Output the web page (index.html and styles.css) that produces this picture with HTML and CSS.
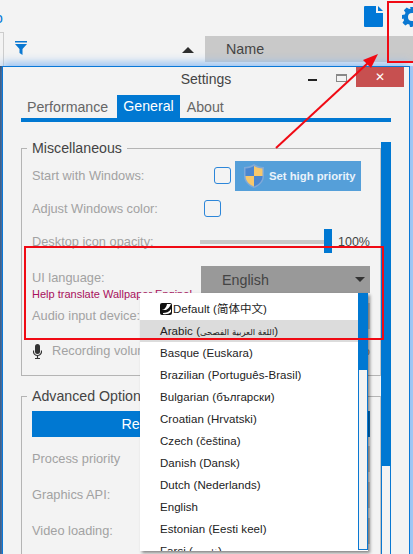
FILE: index.html
```html
<!DOCTYPE html>
<html lang="en">
<head>
<meta charset="utf-8">
<title>Settings</title>
<link rel="stylesheet" href="styles.css">
</head>
<body>
<div class="stage">
  <header class="topbar">
    <span class="stray">o</span>
    <svg class="doc-icon" width="19" height="21" viewBox="0 0 19 21"><path d="M1 0H12V7H19V20a1 1 0 0 1-1 1H1a1 1 0 0 1-1-1V1a1 1 0 0 1 1-1Z"/><path d="M14 0L19 5H14Z"/></svg>
    <svg class="gear-icon" width="20" height="20" viewBox="0 0 20 20"><path fill-rule="evenodd" d="M8 0h4l.6 2.8 1.7.7 2.4-1.6 2.8 2.8-1.6 2.4.7 1.7L20 8v4l-2.9.6-.7 1.7 1.6 2.4-2.8 2.8-2.4-1.6-1.7.7L10.500 20h-2.500l-.6-2.400-1.700-.7-2.400 1.600-2.800-2.800 1.600-2.400-.7-1.700L0 12V8l2.800-.6.7-1.700-1.600-2.400 2.800-2.800 2.400 1.600 1.700-.7ZM10 6a4 4 0 1 0 0 8 4 4 0 0 0 0-8Z"/></svg>
  </header>
  <div class="listhead">
    <svg class="filter-icon" width="12" height="14" viewBox="0 0 12 14"><path d="M0 0H12V1.500H0ZM0 3H12L7.500 8V14L4.500 12V8Z"/></svg>
    <span class="sort-arrow"></span>
    <div class="name-cell"><span>Name</span><i class="name-caret"></i></div>
  </div>
  <div class="lower">
    <section class="window">
      <div class="titlebar">
        <span class="title">Settings</span>
        <span class="win-min"></span>
        <span class="win-max"></span>
        <span class="win-close">✕</span>
      </div>
      <nav class="tabs">
        <span class="tab">Performance</span>
        <span class="tab tab-active">General</span>
        <span class="tab">About</span>
      </nav>
      <div class="content">
        <div class="groups">
          <fieldset class="group group-misc">
            <legend>Miscellaneous</legend>
            <div class="row row-start">
              <span class="label label-start">Start with Windows:</span>
              <span class="check"></span>
              <span class="priority-btn">
                <svg width="20" height="24" viewBox="0 0 20 24"><path d="M10 0C13 2 16 3 20 3V12C20 18 15 22 10 24C5 22 0 18 0 12V3C4 3 7 2 10 0Z" fill="#7fa9d8"/><path d="M10 2C12.500 3.500 15 4.500 18.500 4.500V12H10Z" fill="#f7c76b"/><path d="M10 2V12H1.500V4.500C5 4.500 7.500 3.500 10 2Z" fill="#4b86cf"/><path d="M1.500 12H10V22.500C6 21 1.500 17.500 1.500 12Z" fill="#f7c76b"/><path d="M10 12H18.500C18.500 17.500 14 21 10 22.500Z" fill="#4b86cf"/></svg>
                Set high priority
              </span>
            </div>
            <div class="row row-adjust">
              <span class="label label-adjust">Adjust Windows color:</span>
              <span class="check"></span>
            </div>
            <div class="row row-opacity">
              <span class="label label-slider">Desktop icon opacity:</span>
              <span class="slider"><i class="slider-thumb"></i></span>
              <span class="value">100%</span>
            </div>
            <div class="lang-block">
              <div class="lang-text">
                <span class="label lang-label">UI language:</span>
                <span class="help-link">Help translate Wallpaper Engine!</span>
              </div>
              <div class="select select-dark"><span>English</span><i class="caret"></i></div>
            </div>
            <div class="row row-audio">
              <span class="label label-wide">Audio input device:</span>
              <div class="select select-light"></div>
            </div>
            <div class="row row-record">
              <svg class="mic-icon" width="9" height="15" viewBox="0 0 9 15"><rect x="2" y="0" width="5" height="10" rx="2.500"/><path d="M0.500 6.500V7.500A4 4 0 0 0 8.500 7.500V6.500M4.500 11.500V14M2 14.500H7" fill="none" stroke="#333" stroke-width="1.200"/></svg>
              <span class="label">Recording volume:</span>
              <span class="value value-end">100%</span>
            </div>
          </fieldset>
          <fieldset class="group group-adv">
            <legend>Advanced Options</legend>
            <div class="reset-btn">Reset saved preferences</div>
            <div class="row row-adv"><span class="label label-wide">Process priority</span><div class="select select-light"></div></div>
            <div class="row row-adv"><span class="label label-wide">Graphics API:</span><div class="select select-light"></div></div>
            <div class="row row-adv"><span class="label label-wide">Video loading:</span><div class="select select-light"></div></div>
          </fieldset>
        </div>
        <div class="scrollbar"><div class="scroll-thumb"></div></div>
      </div>
    </section>
  </div>

  <div class="dropdown">
    <ul class="options">
      <li><svg class="flag-icon" width="12" height="12" viewBox="0 0 12 12"><rect width="12" height="12" rx="2" fill="#111"/><path d="M1 7C3 7 6 6 7 1H11C10 4 8 6 6 7ZM3 10C6 10 9 9 11 6V9C9 11 6 11.500 3 11Z" fill="#fff"/></svg>Default (简体中文)</li>
      <li class="option-hover">Arabic (<span class="arabic">اللغة العربية الفصحى</span>)</li>
      <li>Basque (Euskara)</li>
      <li>Brazilian (Português-Brasil)</li>
      <li>Bulgarian (български)</li>
      <li>Croatian (Hrvatski)</li>
      <li>Czech (čeština)</li>
      <li>Danish (Dansk)</li>
      <li>Dutch (Nederlands)</li>
      <li>English</li>
      <li>Estonian (Eesti keel)</li>
      <li>Farsi (<span class="arabic">فارسی</span>)</li>
    </ul>
    <div class="drop-scroll"><div class="drop-thumb"></div></div>
  </div>

  <div class="mark mark-gear"></div>
  <div class="mark mark-lang"></div>
  <svg class="arrow" width="413" height="554" viewBox="0 0 413 554"><path d="M276 148L369 62" stroke="#f00a14" stroke-width="2" fill="none"/><path d="M378 54L363 60L371 68Z" fill="#f00a14"/></svg>
</div>
</body>
</html>
```
FILE: styles.css
```css
* { box-sizing: border-box; }
html, body { margin: 0; padding: 0; }
body {
  width: 413px;
  height: 554px;
  overflow: hidden;
  background: #f3f3f3;
  font-family: "Liberation Sans", Arial, sans-serif;
  color: #444;
}
.stage {
  position: relative;
  width: 413px;
  height: 554px;
  overflow: hidden;
  display: flex;
  flex-direction: column;
}
.topbar {
  height: 36px;
  flex: none;
  display: flex;
  align-items: flex-start;
  padding-top: 6px;
}
.stray { margin: 4px 0 0 -5px; font-size: 14px; line-height: 16px; color: #0078d7; }
.doc-icon { fill: #0078d7; margin-left: auto; }
.gear-icon { fill: #0a78d2; margin: 1px -9px 0 19px; flex: none; }
.listhead {
  height: 26px;
  flex: none;
  display: flex;
  border-top: 0;
  position: relative;
}
.listhead::before {
  content: "";
  position: absolute;
  left: 0;
  top: -4px;
  width: 3px;
  height: 34px;
  border: solid #ccc;
  border-width: 1px 1px 0 0;
}
.filter-icon { fill: #0a78d2; margin: 5px 0 0 15px; flex: none; }
.sort-arrow {
  width: 0;
  height: 0;
  margin: 11px 0 0 155px;
  border: 6px solid transparent;
  border-top: 0;
  border-bottom: 6px solid #2e2e2e;
  flex: none;
}
.name-cell {
  margin-left: 11px;
  flex: 1;
  background: #c9c9c9;
  padding-left: 21px;
  font-size: 14.3px;
  line-height: 26px;
  color: #444;
  display: flex;
  position: relative;
}
.name-caret {
  margin: 11px -10px 0 auto;
  width: 0;
  height: 0;
  border: 4px solid transparent;
  border-top: 4px solid #444;
  border-bottom: 0;
}
.lower {
  flex: 1;
  min-height: 0;
  margin-top: 4px;
  padding: 0 3px 0 2px;
  background: linear-gradient(to right, #0d2a52 0, #0d2a52 2px, #f3f3f3 2px, #f3f3f3 410px, #a9cdf7 410px);
}
.window {
  height: 500px;
  background: #f3f3f3;
  border: 1px solid #0a78d7;
  border-bottom: 0;
  box-shadow: 0 -3px 9px #8dbcf2;
  padding: 0 18px;
  position: relative;
}
.titlebar {
  height: 28px;
  display: flex;
  margin: 0 -18px;
  position: relative;
}
.title {
  position: absolute;
  left: 0;
  right: 0;
  top: 3px;
  text-align: center;
  font-size: 14px;
  line-height: 18px;
}
.win-min { position: absolute; left: 305px; top: 12px; width: 9px; height: 2px; background: #222; }
.win-max { position: absolute; left: 333px; top: 7px; width: 11px; height: 8px; border: 1px solid #888; border-top-width: 2px; }
.win-close {
  position: absolute;
  left: 353px;
  top: 0;
  width: 48px;
  height: 20px;
  background: #c75050;
  color: #fff;
  font-size: 12px;
  line-height: 20px;
  text-align: center;
}
.tabs {
  height: 27px;
  display: flex;
  border-bottom: 4px solid #0078d2;
  align-items: stretch;
  width: 370px;
}
.tab { padding: 3px 6px 0; font-size: 14.2px; line-height: 18px; color: #666; }
.tab-active { background: #0078d2; color: #fff; padding-top: 2px; margin: 0 1px 0 3px; }
.content { display: flex; margin-top: 18px; }
.groups { width: 360px; flex: none; }
.scrollbar {
  width: 10px;
  flex: none;
  margin-top: 2px;
  height: 412px;
  background: #f3f3f3;
  border: solid #0a78d2;
  border-width: 0 1px;
}
.scroll-thumb { height: 324px; margin: 0 -1px; background: #0078d2; }
.group {
  margin: 0;
  padding: 3px 10px 0;
  border: 1px solid #b4b4b4;
  border-right-color: #c4c4c4;
  min-width: 0;
}
.group-misc { height: 236px; }
.group-adv { margin-top: 12px; padding-top: 7px; height: 260px; }
legend {
  margin-left: -5px;
  padding: 0 5px;
  font-size: 14.2px;
  line-height: 16px;
  color: #444;
}
.row { display: flex; align-items: center; }
.row-start, .row-adjust { height: 33px; }
.row-opacity { height: 34px; }
.label { font-size: 12.8px; line-height: 16px; color: #a2a2a2; flex: none; white-space: nowrap; }
.label-start { width: 182px; }
.label-adjust { width: 172px; }
.label-wide { width: 169px; }
.label-slider { width: 168px; }
.check {
  width: 17px;
  height: 17px;
  flex: none;
  border: 1.500px solid #2c86d9;
  border-radius: 3px;
}
.priority-btn {
  margin-left: 4px;
  width: 126px;
  height: 30px;
  flex: none;
  background: #559fd9;
  display: flex;
  align-items: center;
  gap: 5px;
  padding-left: 9px;
  color: #e9f3fb;
  font-size: 11.3px;
  font-weight: bold;
  white-space: nowrap;
}
.slider {
  width: 128px;
  height: 4px;
  background: #c8c8c8;
  position: relative;
  flex: none;
}
.slider-thumb {
  position: absolute;
  right: -4px;
  top: -11px;
  width: 8px;
  height: 24px;
  background: #0078d2;
}
.value { margin-left: auto; font-size: 12.5px; color: #444; }
.value-end { color: #777; }
.lang-block { display: flex; margin-top: 7px; height: 36px; }
.lang-text { width: 169px; flex: none; display: flex; flex-direction: column; }
.lang-label { height: 22px; line-height: 24px; }
.help-link { font-size: 11px; line-height: 12px; color: #a8105c; white-space: nowrap; }
.select {
  flex: 1;
  height: 27px;
  display: flex;
  align-items: center;
}
.select-dark { background: #999; color: #444; font-size: 14.3px; padding-left: 21px; }
.select-light { background: #ccc; height: 26px; }
.caret {
  margin: 0 5px 0 auto;
  width: 0;
  height: 0;
  border: 5px solid transparent;
  border-top: 5px solid #333;
  border-bottom: 0;
}
.row-audio { height: 27px; }
.row-record { height: 22px; margin-top: 11px; }
.mic-icon { fill: #333; flex: none; margin: 0 10px 0 1px; }
.reset-btn {
  height: 26px;
  background: #0078d2;
  color: #fff;
  font-size: 14.3px;
  line-height: 26px;
  text-align: center;
  margin-bottom: 4px;
}
.row-adv { height: 36px; }
.dropdown {
  position: absolute;
  left: 140px;
  top: 293px;
  width: 228px;
  height: 258px;
  display: flex;
  background: #fff;
  box-shadow: 2px 2px 3px rgba(0, 0, 0, .45);
}
.options {
  list-style: none;
  margin: 0;
  padding: 5px 0 0;
  width: 218px;
  height: 258px;
  overflow: hidden;
  flex: none;
}
.options li {
  height: 22px;
  padding-left: 20px;
  font-family: "Liberation Sans", "Noto Sans CJK SC", "DejaVu Sans", sans-serif;
  font-size: 11.5px;
  letter-spacing: .05px;
  line-height: 22px;
  color: #222;
  white-space: nowrap;
}
.option-hover { background: #dcdcdc; }
.arabic { font-family: "DejaVu Sans", sans-serif; font-size: 8.5px; letter-spacing: 0; }
.flag-icon { vertical-align: -2px; margin-right: 1px; }
.drop-scroll {
  width: 10px;
  height: 257px;
  flex: none;
  background: #f3f3f3;
  border: 1px solid #0a78d2;
  border-top: 0;
}
.drop-thumb { height: 77px; margin: 0 -1px; background: #0078d2; }
.mark { position: absolute; border: 2px solid #f00a14; }
.mark-gear { left: 387px; top: 1px; width: 40px; height: 62px; }
.mark-lang { left: 24px; top: 246px; width: 360px; height: 94px; }
.arrow { position: absolute; left: 0; top: 0; pointer-events: none; }
```
